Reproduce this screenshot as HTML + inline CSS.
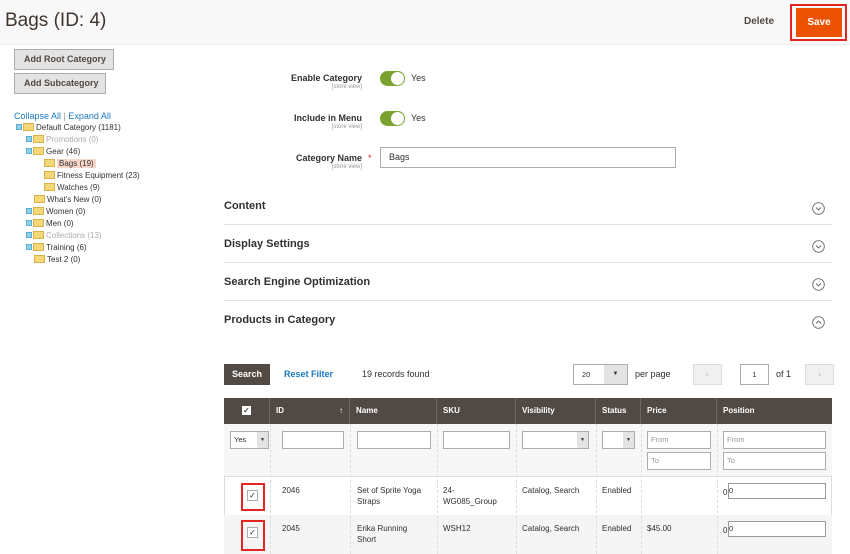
<!DOCTYPE html>
<html><head><meta charset="utf-8"><style>
*{box-sizing:border-box;margin:0;padding:0}
body{width:850px;height:554px;overflow:hidden;background:#fff;font-family:"Liberation Sans",sans-serif;color:#303030;position:relative;font-size:9px}
.a{position:absolute;white-space:nowrap}
.hdr{position:absolute;left:0;top:0;width:850px;height:45px;background:#f8f8f8;border-bottom:1px solid #eee}
.btn{position:absolute;background:#e3e3e3;border:1px solid #adadad;font-weight:bold;color:#514943;font-size:9px;padding-left:9px;line-height:19px}
.tree div{position:absolute;white-space:nowrap;font-size:8px;color:#333}
.fold{display:inline-block;width:11px;height:8px;background:#f5d77a;border:1px solid #d9b24c;vertical-align:-1px;margin-right:2px}
.pm{display:inline-block;width:6px;height:6px;background:#8fd0e8;border:1px solid #5ab0d0;margin-right:1px;vertical-align:0}
.lbl{position:absolute;right:488px;text-align:right;font-weight:bold;font-size:9px;color:#303030}
.sv{display:block;font-weight:normal;font-size:6px;color:#999;margin-top:1px}
.tog{position:absolute;left:380px;width:25px;height:15px;border-radius:8px;background:#79a22e}
.tog:after{content:"";position:absolute;right:1px;top:1px;width:13px;height:13px;border-radius:50%;background:#fff}
.sec{position:absolute;left:224px;width:608px;font-weight:bold;font-size:11px;color:#303030}
.ln{position:absolute;left:224px;width:608px;height:1px;background:#e3e3e3}
.chev{position:absolute;left:812px}
.th{position:absolute;top:398px;height:26px;background:#514943;color:#fff;font-weight:bold;font-size:8px;line-height:26px;padding-left:6px;border-right:1px solid #6e6661}
.in{position:absolute;height:18px;border:1px solid #adadad;background:#fff;font-size:7.5px;color:#999;padding-left:3px;line-height:16px}
.cell{position:absolute;font-size:8px;color:#303030;line-height:11px}
.vl{position:absolute;width:1px;border-left:1px dashed #ddd}
</style></head><body>
<div class="hdr"></div>
<div class="a" style="left:5px;top:10px;font-size:19px;color:#41362f">Bags (ID: 4)</div>
<div class="a" style="left:744px;top:16px;font-size:10px;font-weight:bold;color:#514943">Delete</div>
<div class="a" style="left:790px;top:4px;width:57px;height:37px;border:2px solid #e22626"></div>
<div class="a" style="left:796px;top:8px;width:46px;height:29px;background:#eb5202;color:#fff;font-weight:bold;font-size:10px;text-align:center;line-height:29px">Save</div>

<div class="btn" style="left:14px;top:49px;width:100px;height:21px">Add Root Category</div>
<div class="btn" style="left:14px;top:73px;width:92px;height:21px">Add Subcategory</div>
<div class="a" style="left:14px;top:111px;font-size:9px;color:#1979c3">Collapse All <span style="color:#999">|</span> Expand All</div>
<div class="tree">
<div style="left:16px;top:123px"><span class="pm"></span><span class="fold"></span>Default Category (1181)</div>
<div style="left:26px;top:135px;color:#aaa"><span class="pm"></span><span class="fold"></span>Promotions (0)</div>
<div style="left:26px;top:147px"><span class="pm"></span><span class="fold"></span>Gear (46)</div>
<div style="left:44px;top:159px"><span class="fold"></span><span style="background:#f8d7c8;padding:0 2px">Bags (19)</span></div>
<div style="left:44px;top:171px"><span class="fold"></span>Fitness Equipment (23)</div>
<div style="left:44px;top:183px"><span class="fold"></span>Watches (9)</div>
<div style="left:34px;top:195px"><span class="fold"></span>What's New (0)</div>
<div style="left:26px;top:207px"><span class="pm"></span><span class="fold"></span>Women (0)</div>
<div style="left:26px;top:219px"><span class="pm"></span><span class="fold"></span>Men (0)</div>
<div style="left:26px;top:231px;color:#aaa"><span class="pm"></span><span class="fold"></span>Collections (13)</div>
<div style="left:26px;top:243px"><span class="pm"></span><span class="fold"></span>Training (6)</div>
<div style="left:34px;top:255px"><span class="fold"></span>Test 2 (0)</div>
</div>

<div class="lbl" style="top:73px">Enable Category<span class="sv">[store view]</span></div>
<div class="tog" style="top:71px"></div><div class="a" style="left:411px;top:73px;font-size:9px">Yes</div>
<div class="lbl" style="top:113px">Include in Menu<span class="sv">[store view]</span></div>
<div class="tog" style="top:111px"></div><div class="a" style="left:411px;top:113px;font-size:9px">Yes</div>
<div class="lbl" style="top:153px">Category Name<span class="sv">[store view]</span></div>
<div class="a" style="left:368px;top:153px;color:#e22626">*</div>
<div class="a" style="left:380px;top:147px;width:296px;height:21px;border:1px solid #adadad;padding-left:8px;line-height:19px;font-size:9px">Bags</div>

<div class="sec" style="top:200px">Content</div><svg class="chev" style="top:202px" width="13" height="13" viewBox="0 0 13 13"><circle cx="6.5" cy="6.5" r="5.8" fill="none" stroke="#666" stroke-width="0.9"/><path d="M4 5.5l2.5 2.5 2.5-2.5" fill="none" stroke="#666" stroke-width="0.9"/></svg><div class="ln" style="top:224px"></div>
<div class="sec" style="top:238px">Display Settings</div><svg class="chev" style="top:240px" width="13" height="13" viewBox="0 0 13 13"><circle cx="6.5" cy="6.5" r="5.8" fill="none" stroke="#666" stroke-width="0.9"/><path d="M4 5.5l2.5 2.5 2.5-2.5" fill="none" stroke="#666" stroke-width="0.9"/></svg><div class="ln" style="top:262px"></div>
<div class="sec" style="top:276px">Search Engine Optimization</div><svg class="chev" style="top:278px" width="13" height="13" viewBox="0 0 13 13"><circle cx="6.5" cy="6.5" r="5.8" fill="none" stroke="#666" stroke-width="0.9"/><path d="M4 5.5l2.5 2.5 2.5-2.5" fill="none" stroke="#666" stroke-width="0.9"/></svg><div class="ln" style="top:300px"></div>
<div class="sec" style="top:314px">Products in Category</div><svg class="chev" style="top:316px" width="13" height="13" viewBox="0 0 13 13"><circle cx="6.5" cy="6.5" r="5.8" fill="none" stroke="#666" stroke-width="0.9"/><path d="M4 7.5l2.5-2.5 2.5 2.5" fill="none" stroke="#666" stroke-width="0.9"/></svg>

<div class="a" style="left:224px;top:364px;width:46px;height:21px;background:#514943;color:#fff;font-weight:bold;font-size:9px;text-align:center;line-height:21px">Search</div>
<div class="a" style="left:284px;top:369px;color:#1979c3;font-weight:bold;font-size:9px">Reset Filter</div>
<div class="a" style="left:362px;top:369px;font-size:9px">19 records found</div>
<div class="in" style="left:573px;top:364px;width:55px;height:21px;color:#303030;line-height:19px;padding-left:8px">20</div>
<div class="a" style="left:604px;top:365px;width:23px;height:19px;background:#e3e3e3;font-size:6px;text-align:center;line-height:19px">▼</div>
<div class="a" style="left:635px;top:369px;font-size:9px">per page</div>
<div class="a" style="left:693px;top:364px;width:29px;height:21px;background:#f0f0f0;border:1px solid #ddd;color:#bbb;text-align:center;line-height:19px">‹</div>
<div class="in" style="left:740px;top:364px;width:29px;height:21px;color:#303030;text-align:center;line-height:19px;padding:0">1</div>
<div class="a" style="left:776px;top:369px;font-size:9px">of 1</div>
<div class="a" style="left:805px;top:364px;width:29px;height:21px;background:#f0f0f0;border:1px solid #ddd;color:#bbb;text-align:center;line-height:19px">›</div>

<div class="a" style="left:224px;top:424px;width:608px;height:130px;border-left:1px solid #ddd;border-right:1px solid #ddd"></div>
<div class="a" style="left:224px;top:424px;width:608px;height:53px;background:#f7f7f7;border-bottom:1px solid #ddd"></div>
<div class="a" style="left:224px;top:515px;width:608px;height:39px;background:#f5f5f5"></div>
<div class="vl" style="left:270px;top:424px;height:130px"></div>
<div class="vl" style="left:350px;top:424px;height:130px"></div>
<div class="vl" style="left:437px;top:424px;height:130px"></div>
<div class="vl" style="left:516px;top:424px;height:130px"></div>
<div class="vl" style="left:596px;top:424px;height:130px"></div>
<div class="vl" style="left:641px;top:424px;height:130px"></div>
<div class="vl" style="left:717px;top:424px;height:130px"></div>

<div class="th" style="left:224px;width:46px;text-align:center;padding:0"><span style="display:inline-block;width:9px;height:9px;background:#fff;color:#514943;font-size:8px;line-height:9px">✓</span></div>
<div class="th" style="left:270px;width:80px">ID<span style="position:absolute;right:6px">↑</span></div>
<div class="th" style="left:350px;width:87px">Name</div>
<div class="th" style="left:437px;width:79px">SKU</div>
<div class="th" style="left:516px;width:80px">Visibility</div>
<div class="th" style="left:596px;width:45px">Status</div>
<div class="th" style="left:641px;width:76px">Price</div>
<div class="th" style="left:717px;width:115px;border-right:none">Position</div>

<div class="in" style="left:230px;top:431px;width:39px;color:#303030">Yes<span style="position:absolute;right:0;top:0;width:11px;height:16px;background:#e3e3e3;font-size:5px;text-align:center">▼</span></div>
<div class="in" style="left:282px;top:431px;width:62px"></div>
<div class="in" style="left:357px;top:431px;width:74px"></div>
<div class="in" style="left:443px;top:431px;width:67px"></div>
<div class="in" style="left:522px;top:431px;width:67px"><span style="position:absolute;right:0;top:0;width:11px;height:16px;background:#e3e3e3;font-size:5px;text-align:center;color:#303030">▼</span></div>
<div class="in" style="left:602px;top:431px;width:33px"><span style="position:absolute;right:0;top:0;width:11px;height:16px;background:#e3e3e3;font-size:5px;text-align:center;color:#303030">▼</span></div>
<div class="in" style="left:647px;top:431px;width:64px">From</div>
<div class="in" style="left:647px;top:452px;width:64px">To</div>
<div class="in" style="left:723px;top:431px;width:103px">From</div>
<div class="in" style="left:723px;top:452px;width:103px">To</div>

<div class="a" style="left:241px;top:483px;width:24px;height:28px;border:2px solid #e22626"></div>
<div class="a" style="left:247px;top:490px;width:11px;height:11px;border:1px solid #adadad;background:#fff;font-size:8px;text-align:center;line-height:10px">✓</div>
<div class="cell" style="left:282px;top:485px">2046</div>
<div class="cell" style="left:357px;top:485px">Set of Sprite Yoga<br>Straps</div>
<div class="cell" style="left:443px;top:485px">24-<br>WG085_Group</div>
<div class="cell" style="left:522px;top:485px">Catalog, Search</div>
<div class="cell" style="left:602px;top:485px">Enabled</div>
<div class="cell" style="left:723px;top:487px">0</div>
<div class="in" style="left:728px;top:483px;width:98px;height:16px;border-color:#999;color:#303030;line-height:14px;padding-left:0">0</div>

<div class="a" style="left:241px;top:520px;width:24px;height:31px;border:2px solid #e22626"></div>
<div class="a" style="left:247px;top:527px;width:11px;height:11px;border:1px solid #adadad;background:#fff;font-size:8px;text-align:center;line-height:10px">✓</div>
<div class="cell" style="left:282px;top:523px">2045</div>
<div class="cell" style="left:357px;top:523px">Erika Running<br>Short</div>
<div class="cell" style="left:443px;top:523px">WSH12</div>
<div class="cell" style="left:522px;top:523px">Catalog, Search</div>
<div class="cell" style="left:602px;top:523px">Enabled</div>
<div class="cell" style="left:647px;top:523px">$45.00</div>
<div class="cell" style="left:723px;top:525px">0</div>
<div class="in" style="left:728px;top:521px;width:98px;height:16px;border-color:#999;color:#303030;line-height:14px;padding-left:0">0</div>
</body></html>
